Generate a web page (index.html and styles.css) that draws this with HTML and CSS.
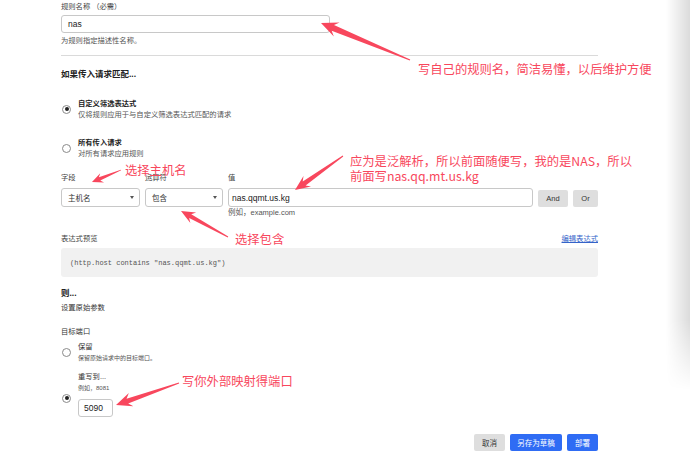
FILE: index.html
```html
<!DOCTYPE html>
<html lang="zh-CN">
<head>
    <meta charset="UTF-8">
    <meta name="viewport" content="width=device-width, initial-scale=1.0">
    <link rel="stylesheet" href="styles.css">
    <title>规则</title>
</head>
<body>
    <div class="page">
        <label class="lbl">规则名称 （必需）</label>
        <div class="input name-input">nas</div>
        <div class="hint">为规则指定描述性名称。</div>
        <hr class="rule">

        <h3 class="heading">如果传入请求匹配...</h3>
        <div class="option first">
            <span class="radio on"></span>
            <div>
                <div class="opt-title">自定义筛选表达式</div>
                <div class="opt-desc">仅将规则应用于与自定义筛选表达式匹配的请求</div>
            </div>
        </div>
        <div class="option second">
            <span class="radio"></span>
            <div>
                <div class="opt-title">所有传入请求</div>
                <div class="opt-desc">对所有请求应用规则</div>
            </div>
        </div>

        <div class="fields">
            <div class="lbl">字段</div>
            <div class="lbl">运算符</div>
            <div class="lbl">值</div>
            <div></div>
            <div></div>
            <div class="select">主机名<span class="caret"></span></div>
            <div class="select">包含<span class="caret"></span></div>
            <div class="input value">nas.qqmt.us.kg</div>
            <div class="btn gray small">And</div>
            <div class="btn gray small">Or</div>
            <div></div>
            <div></div>
            <div class="hint example">例如，example.com</div>
        </div>

        <div class="preview-head">
            <span>表达式预览</span>
            <a class="link">编辑表达式</a>
        </div>
        <div class="preview">(http.host contains "nas.qqmt.us.kg")</div>

        <h3 class="heading then">则...</h3>
        <div class="plain">设置原始参数</div>
        <div class="plain port-label">目标端口</div>

        <div class="option keep">
            <span class="radio"></span>
            <div>
                <div class="opt-name">保留</div>
                <div class="opt-small">保留原始请求中的目标端口。</div>
            </div>
        </div>
        <div class="option rewrite">
            <span class="radio on"></span>
            <div>
                <div class="opt-name">重写到...</div>
                <div class="opt-small">例如，8081</div>
                <div class="input port">5090</div>
            </div>
        </div>

        <div class="actions">
            <div class="btn gray">取消</div>
            <div class="btn blue wide">另存为草稿</div>
            <div class="btn blue">部署</div>
        </div>
    </div>

    <!-- annotations -->
    <div class="note n1">写自己的规则名，简洁易懂，以后维护方便</div>
    <div class="note n2">选择主机名</div>
    <div class="note n3">应为是泛解析，所以前面随便写，我的是NAS，所以<br>前面写nas.qq.mt.us.kg</div>
    <div class="note n4">选择包含</div>
    <div class="note n5">写你外部映射得端口</div>

    <svg class="arrows" width="690" height="468" viewBox="0 0 690 468">
        <g fill="#f8475d">
            <polygon transform="translate(410,60) rotate(-157.4)" points="0,-0.6 83.6,-3 79.4,-7.5 96.4,0 79.4,7.5 83.6,3 0,0.6"/>
            <polygon transform="translate(121,170) rotate(157.5)" points="0,-0.4 23.2,-1.8 20.4,-5 31.4,0 20.4,5 23.2,1.8 0,0.4"/>
            <polygon transform="translate(343,156) rotate(144.7)" points="0,-0.5 47.6,-2.5 43.8,-6.5 58.8,0 43.8,6.5 47.6,2.5 0,0.5"/>
            <polygon transform="translate(228,237) rotate(-151.05)" points="0,-0.5 43.2,-2.2 39.7,-6 53.7,0 39.7,6 43.2,2.2 0,0.5"/>
            <polygon transform="translate(179,383) rotate(160.75)" points="0,-0.5 54.7,-2.5 50.7,-7 66.7,0 50.7,7 54.7,2.5 0,0.5"/>
        </g>
    </svg>

    <div class="edge"></div>
</body>
</html>
```

FILE: styles.css
```css
*{
    margin: 0;
    padding: 0;
    box-sizing: border-box;
}
body{
    position: relative;
    width: 690px;
    height: 468px;
    overflow: hidden;
    background: #fff;
    color: #333;
    font-family: "Liberation Sans", "Noto Sans CJK SC", sans-serif;
}
.page{
    width: 537px;
    margin-left: 61px;
    padding-top: 2px;
    font-size: 7.3px;
}
.lbl{
    display: block;
    line-height: 10px;
    color: #444;
}
.input{
    height: 18px;
    border: 1px solid #c8c8c8;
    border-radius: 3px;
    display: flex;
    align-items: center;
    padding-left: 6px;
    font-size: 8.5px;
    color: #222;
}
.name-input{
    width: 269px;
    margin-top: 3px;
}
.hint{
    line-height: 10px;
    margin-top: 3px;
    color: #555;
}
.rule{
    border: 0;
    border-top: 1px solid #dadada;
    margin-top: 9px;
}
.heading{
    font-size: 8.5px;
    font-weight: bold;
    line-height: 12px;
    margin-top: 12px;
    color: #222;
}
.heading.then{
    margin-top: 10px;
}

/* radio options */
.option{
    display: flex;
    align-items: center;
    gap: 7px;
    margin-left: 1px;
}
.option.first{ margin-top: 18px; }
.option.second{ margin-top: 17px; }
.option.keep{ margin-top: 4px; }
.option.rewrite{ margin-top: 8px; }
.radio{
    flex: none;
    width: 9px;
    height: 9px;
    border: 1px solid #8a8a8a;
    border-radius: 50%;
    background: #fff;
    display: flex;
    align-items: center;
    justify-content: center;
}
.radio.on::after{
    content: "";
    width: 4px;
    height: 4px;
    border-radius: 50%;
    background: #222;
}
.rewrite .radio{
    margin-top: 8px;
}
.opt-title{
    font-weight: bold;
    line-height: 11px;
    color: #222;
}
.opt-desc{
    line-height: 11px;
    color: #555;
}
.opt-name{
    line-height: 12px;
    color: #333;
}
.opt-small{
    font-size: 6px;
    line-height: 10px;
    color: #555;
}
.input.port{
    width: 35px;
    margin-top: 6px;
    padding-left: 5px;
}

/* field / operator / value row */
.fields{
    display: grid;
    grid-template-columns: 79px 78px 305px 30px 25px;
    column-gap: 5px;
    margin-top: 14px;
}
.select{
    height: 19px;
    margin-top: 5px;
    border: 1px solid #c8c8c8;
    border-radius: 3px;
    display: flex;
    align-items: center;
    justify-content: space-between;
    padding: 0 5px 0 6px;
    font-size: 7.5px;
    color: #333;
}
.caret{
    width: 0;
    height: 0;
    border-left: 2.5px solid transparent;
    border-right: 2.5px solid transparent;
    border-top: 3px solid #555;
}
.input.value{
    height: 19px;
    margin-top: 5px;
    padding-left: 3px;
}
.btn{
    height: 17px;
    border-radius: 2px;
    display: flex;
    align-items: center;
    justify-content: center;
    font-size: 7.5px;
}
.btn.small{
    margin-top: 7px;
}
.gray{
    background: #dedede;
    color: #333;
}
.blue{
    background: #2f6cf4;
    color: #fff;
}
.hint.example{
    margin-top: 1px;
    font-size: 7.5px;
}

/* expression preview */
.preview-head{
    display: flex;
    justify-content: space-between;
    line-height: 10px;
    margin-top: 16px;
    color: #444;
}
.link{
    color: #3463c9;
    text-decoration: underline;
}
.preview{
    height: 29px;
    margin-top: 4px;
    background: #f1f1f1;
    border-radius: 3px;
    display: flex;
    align-items: center;
    padding-left: 9px;
    font-family: "Liberation Mono", monospace;
    font-size: 7px;
    color: #555;
}
.plain{
    line-height: 10px;
    margin-top: 4px;
    color: #333;
}
.plain.port-label{
    margin-top: 14px;
}

.actions{
    display: flex;
    justify-content: flex-end;
    gap: 5px;
    margin-top: 17px;
}
.actions .btn{
    width: 31px;
}
.actions .btn.wide{
    width: 52px;
}

/* red annotations */
.note{
    position: absolute;
    font-family: "Noto Sans CJK SC", "Liberation Sans", sans-serif;
    font-size: 12.3px;
    line-height: 15px;
    color: #f8475d;
    white-space: nowrap;
}
.n1{ left: 418px; top: 62px; }
.n2{ left: 125px; top: 163px; }
.n3{ left: 350px; top: 154px; }
.n4{ left: 235px; top: 232px; }
.n5{ left: 182px; top: 374px; }
.arrows{
    position: absolute;
    left: 0;
    top: 0;
    pointer-events: none;
}
.edge{
    position: absolute;
    right: 0;
    top: 0;
    width: 24px;
    height: 390px;
    background: linear-gradient(to right, rgba(0,0,0,0), rgba(0,0,0,0.14));
    -webkit-mask-image: linear-gradient(to bottom, #000 82%, transparent);
    mask-image: linear-gradient(to bottom, #000 82%, transparent);
}
```
